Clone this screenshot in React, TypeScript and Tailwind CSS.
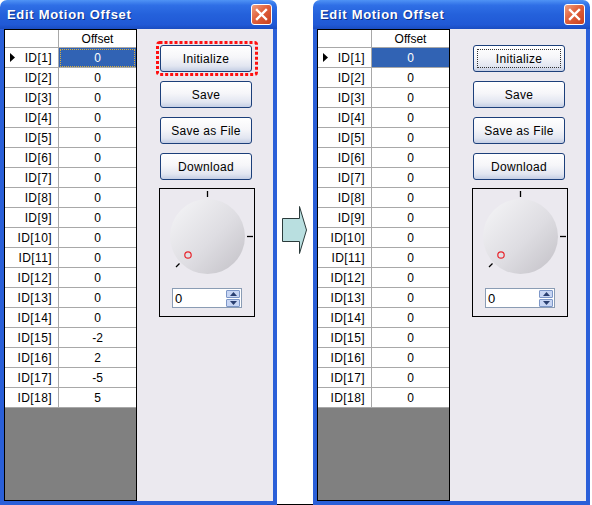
import React from "react";

const FONT = { fontFamily: '"Liberation Sans", Arial, sans-serif' };

const leftValues = ["0", "0", "0", "0", "0", "0", "0", "0", "0", "0", "0", "0", "0", "0", "-2", "2", "-5", "5"];
const rightValues = Array.from({ length: 18 }, () => "0");

function CloseButton() {
  return (
    <div className="w-[21px] h-[21px] rounded-[3px] border border-white flex items-center justify-center bg-[linear-gradient(135deg,#f0a080_0%,#e0603c_45%,#c8401e_100%)]">
      <svg width="13" height="13" viewBox="0 0 13 13">
        <path d="M2 2 L11 11 M11 2 L2 11" stroke="#ffffff" strokeWidth="2.4" strokeLinecap="square" />
      </svg>
    </div>
  );
}

function XpButton({ label, focus }: { label: string; focus?: boolean }) {
  return (
    <div className="relative w-[92px] h-[27px] rounded-[3px] border border-[#1c3f7a] flex items-center justify-center text-[12px] text-black tracking-[0.3px] bg-[linear-gradient(180deg,#ffffff_0%,#f6f6f9_45%,#e2e6f1_80%,#c4cee4_100%)]">
      {label}
      {focus && <span className="absolute inset-[3px] border border-dotted border-[#333]" />}
    </div>
  );
}

function Knob() {
  return (
    <div className="w-[96px] h-[129px] border border-black flex flex-col">
      <svg width="94" height="97" viewBox="0 0 94 97">
        <defs>
          <linearGradient id="kg" x1="0" y1="0" x2="1" y2="1">
            <stop offset="0%" stopColor="#f6f6f8" />
            <stop offset="55%" stopColor="#dedde2" />
            <stop offset="100%" stopColor="#c2c0c6" />
          </linearGradient>
        </defs>
        <line x1="47.5" y1="2" x2="47.5" y2="8" stroke="#000" strokeWidth="1.3" />
        <line x1="87" y1="47.5" x2="93" y2="47.5" stroke="#000" strokeWidth="1.3" />
        <line x1="16" y1="78" x2="19.5" y2="74.5" stroke="#000" strokeWidth="1.2" />
        <circle cx="47.5" cy="47.5" r="37.5" fill="url(#kg)" />
        <circle cx="28" cy="66" r="3.2" fill="none" stroke="#e8242c" strokeWidth="1.2" />
      </svg>
      <div className="ml-[12px] mt-[2px] w-[70px] h-[20px] border border-[#8a9cb4] bg-white flex items-center justify-between pl-[2px] pr-[1px]">
        <span className="text-[13px] leading-none text-black">0</span>
        <div className="flex flex-col gap-[1px]">
          <div className="w-[14px] h-[8px] rounded-[1px] border border-[#7d97c8] bg-[#c8d6f4] flex items-center justify-center">
            <svg width="7" height="4" viewBox="0 0 7 4"><path d="M0 4 L3.5 0 L7 4 Z" fill="#2a3f70" /></svg>
          </div>
          <div className="w-[14px] h-[8px] rounded-[1px] border border-[#7d97c8] bg-[#c8d6f4] flex items-center justify-center">
            <svg width="7" height="4" viewBox="0 0 7 4"><path d="M0 0 L3.5 4 L7 0 Z" fill="#2a3f70" /></svg>
          </div>
        </div>
      </div>
    </div>
  );
}

function Grid({ values, dottedSel }: { values: string[]; dottedSel?: boolean }) {
  return (
    <div className="w-[133px] h-full border border-black bg-[#808080] flex flex-col">
      <div className="h-[18px] flex shrink-0">
        <div className="w-[54px] bg-white border-r border-b border-[#a8a8a8]" />
        <div className="flex-1 bg-white border-b border-[#a8a8a8] flex items-center justify-center text-[12px] text-black">
          Offset
        </div>
      </div>
      {values.map((v, i) => (
        <div key={i} className="h-[20px] flex shrink-0">
          <div className="w-[54px] bg-white border-r border-b border-[#a8a8a8] flex items-center justify-between pl-[5px] pr-[6px] text-[12px] text-black">
            <span className="w-[6px]">
              {i === 0 && (
                <svg width="5" height="9" viewBox="0 0 5 9"><path d="M0 0 L5 4.5 L0 9 Z" fill="#000" /></svg>
              )}
            </span>
            <span className="tracking-[0.4px]">ID[{i + 1}]</span>
          </div>
          {i === 0 ? (
            <div
              className={`flex-1 border-b border-[#a8a8a8] bg-[#3163b4] flex items-center justify-center text-[12px] text-white ${
                dottedSel ? "outline outline-1 outline-dotted outline-[#d8b040] -outline-offset-2" : ""
              }`}
            >
              {v}
            </div>
          ) : (
            <div className="flex-1 bg-white border-b border-[#a8a8a8] flex items-center justify-center text-[12px] text-black">
              {v}
            </div>
          )}
        </div>
      ))}
    </div>
  );
}

function MotionWindow({ values, redFocus }: { values: string[]; redFocus?: boolean }) {
  return (
    <div className="w-[277px] h-[505px] flex flex-col shrink-0">
      {/* Title bar */}
      <div className="h-[29px] shrink-0 rounded-t-[7px] flex items-center justify-between pl-[7px] pr-[5px] bg-[linear-gradient(180deg,#4f93f5_0%,#2f6fe6_18%,#2461db_50%,#2059d6_85%,#1a4cc0_100%)]">
        <span className="text-white font-bold text-[13px] tracking-[0.7px] [text-shadow:1px_1px_0_#0b2f8a]">
          Edit Motion Offset
        </span>
        <CloseButton />
      </div>

      {/* Body */}
      <div className="flex-1 flex border-l-[4px] border-r-[4px] border-b-[4px] border-[#2a5fd8] bg-[#ebe9ef] min-h-0">
        <Grid values={values} dottedSel={redFocus} />

        <div className="flex-1 flex flex-col pl-[22px] pt-[16px]">
          <div className="flex flex-col gap-[9px] ml-[1px]">
            <div className="relative">
              <XpButton label="Initialize" focus={!redFocus} />
              {redFocus && (
                <svg className="absolute -left-[4px] -top-[4px]" width="102" height="35" viewBox="0 0 102 35">
                  <rect x="1.5" y="1.5" width="99" height="32" rx="2" fill="none" stroke="#ff1010" strokeWidth="3" strokeDasharray="3 2" />
                </svg>
              )}
            </div>
            <XpButton label="Save" />
            <XpButton label="Save as File" />
            <XpButton label="Download" />
          </div>
          <div className="mt-[8px]">
            <Knob />
          </div>
        </div>
      </div>
    </div>
  );
}

export default function App() {
  return (
    <div className="w-[592px] h-[505px] bg-white flex overflow-hidden" style={FONT}>
      <MotionWindow values={leftValues} redFocus />
      <div className="w-[36px] h-full shrink-0 border-b border-black pt-[206px] pl-[5px]">
        <svg width="26" height="49" viewBox="0 0 26 49">
          <path d="M0.5 12.5 L17.5 12.5 L17.5 0.5 L24.5 24 L17.5 47.5 L17.5 35.5 L0.5 35.5 Z" fill="#b9dfe0" stroke="#2b3b3b" strokeWidth="1" />
        </svg>
      </div>
      <MotionWindow values={rightValues} />
    </div>
  );
}
